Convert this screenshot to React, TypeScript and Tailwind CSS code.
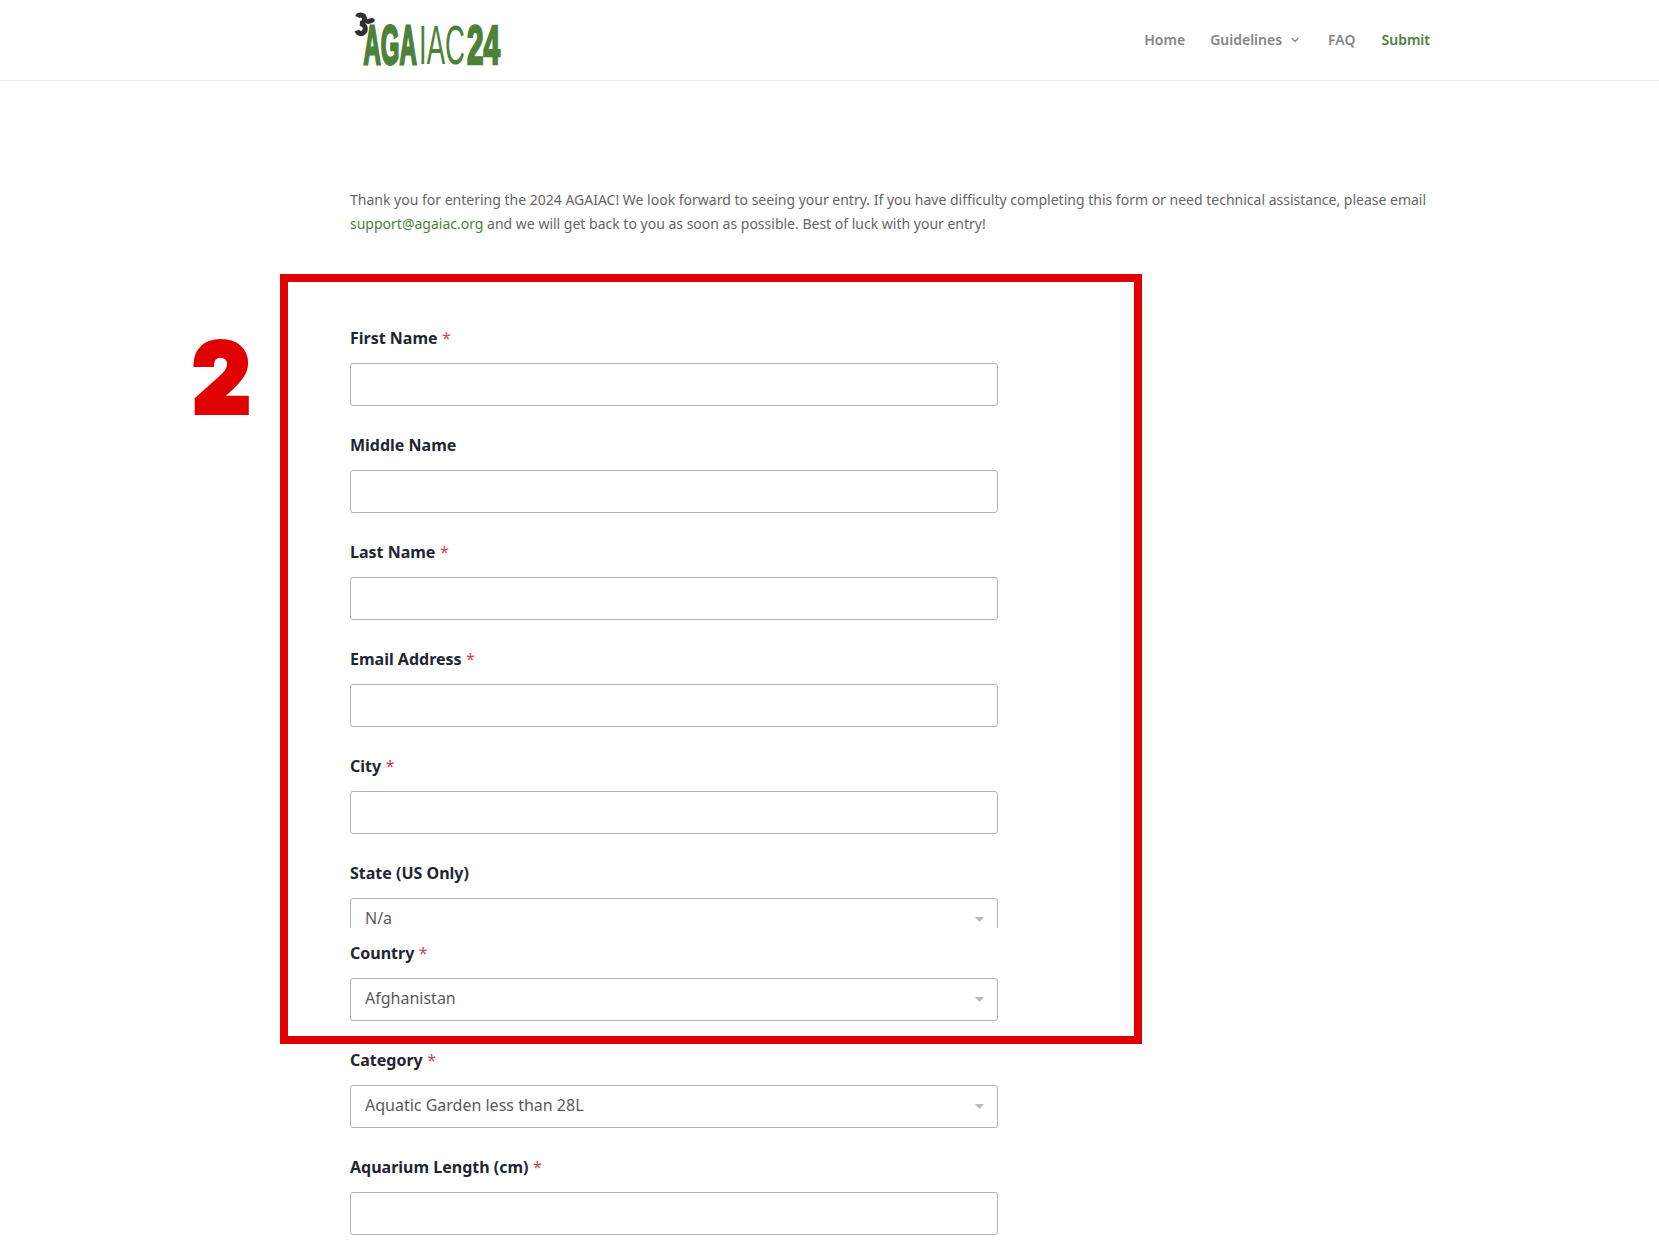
import { ChevronDown } from 'lucide-react';

const sans = 'font-["Noto_Sans","Open_Sans",sans-serif]';

const textFields = [
  { label: 'First Name', required: true },
  { label: 'Middle Name', required: false },
  { label: 'Last Name', required: true },
  { label: 'Email Address', required: true },
  { label: 'City', required: true },
];

function Label({ text, required }: { text: string; required?: boolean }) {
  return (
    <label className="block h-6 mb-[13px] text-base leading-6 font-bold text-[#1f2630]">
      {text}
      {required && <span className="ml-[4.5px] font-normal text-[#c9484f]">*</span>}
    </label>
  );
}

function TextInput() {
  return (
    <input
      type="text"
      className="block w-full h-[43px] bg-white border border-[#b4b4b4] rounded-[3px] outline-none"
    />
  );
}

function SelectBox({ value }: { value: string }) {
  return (
    <div className="relative h-[43px] w-full">
      <select className="block w-full h-[43px] appearance-none bg-white border border-[#b4b4b4] rounded-[3px] pl-[14px] pb-[2px] text-base text-[#5a5a5a] outline-none">
        <option>{value}</option>
      </select>
      <svg
        className="absolute right-[14px] top-[19px]"
        width="9"
        height="5"
        viewBox="0 0 9 5"
        aria-hidden="true"
      >
        <path d="M0 0h9L4.5 5z" fill="#b9b9b9" />
      </svg>
    </div>
  );
}

function Logo() {
  return (
    <svg width="155" height="76" viewBox="0 0 155 76" aria-label="AGAIAC24">
      <path
        d="M7.500 15C9 12 14.500 12.500 14.500 17c0 3.500-3.500 4.500-4.500 4.500 4.500.5 6.500 4.500 4.500 8-2 3-6.500 2.500-7.500-1"
        fill="none"
        stroke="#2f3130"
        strokeWidth="5"
      />
      <ellipse cx="20" cy="19" rx="4.800" ry="2.600" fill="#2f3130" transform="rotate(-15 20 19)" />
      <g fontFamily="Liberation Sans, sans-serif" fill="#4c8238" stroke="#4c8238" fontSize="55">
        <text transform="translate(13.500 62) scale(0.435 1)" fontWeight="700" strokeWidth="2.200" vectorEffect="non-scaling-stroke">AGA</text>
        <text transform="translate(69 62) scale(0.5 1)" fontWeight="400" strokeWidth="0">IAC</text>
        <text transform="translate(117 62) scale(0.54 1)" fontWeight="700" strokeWidth="2.200" vectorEffect="non-scaling-stroke">24</text>
      </g>
    </svg>
  );
}

export default function App() {
  return (
    <div className={`relative min-h-[1249px] bg-white ${sans}`}>
      <header className="h-[81px] border-b border-[#e9e9e9] shadow-[0_1px_2px_rgba(0,0,0,0.03)]">
        <div className="ml-[350px] w-[1080px] h-full flex items-center justify-between">
          <Logo />
          <nav className="flex items-center text-sm font-semibold text-[#858585]">
            <a className="mr-[25px]">Home</a>
            <a className="flex items-center mr-[27px]">
              Guidelines
              <ChevronDown className="ml-[7px]" size={12} strokeWidth={2.5} />
            </a>
            <a className="mr-[26px]">FAQ</a>
            <a className="text-[#4f7f3d]">Submit</a>
          </nav>
        </div>
      </header>

      <main className="ml-[350px] w-[1080px] pt-[107px] pb-[14px]">
        <p className="text-sm leading-[24.3px] text-[#666]">
          Thank you for entering the 2024 AGAIAC! We look forward to seeing your entry. If you have
          difficulty completing this form or need technical assistance, please email{' '}
          <a className="text-[#4f7f3d]">support@agaiac.org</a> and we will get back to you as soon as
          possible. Best of luck with your entry!
        </p>

        <form className="w-[648px] mt-[89px]">
          <div className="flex flex-col gap-[27px]">
            {textFields.map((f) => (
              <div key={f.label}>
                <Label text={f.label} required={f.required} />
                <TextInput />
              </div>
            ))}
            <div className="mb-[-14px]">
              <Label text="State (US Only)" />
              <div className="h-[30px] overflow-hidden">
                <SelectBox value="N/a" />
              </div>
            </div>
            <div>
              <Label text="Country" required />
              <SelectBox value="Afghanistan" />
            </div>
            <div>
              <Label text="Category" required />
              <SelectBox value="Aquatic Garden less than 28L" />
            </div>
            <div>
              <Label text="Aquarium Length (cm)" required />
              <TextInput />
            </div>
          </div>
        </form>
      </main>

      {/* red annotation drawn over the form */}
      <div className="absolute left-[280px] top-[274px] w-[862px] h-[770px] border-8 border-[#e00000] pointer-events-none" />
      <div className='absolute left-[190px] top-[319px] text-[97px] leading-[118px] font-black text-[#e00000] font-["Inter",sans-serif] [-webkit-text-stroke:4px_#e00000] scale-x-[0.93]'>
        2
      </div>
    </div>
  );
}
